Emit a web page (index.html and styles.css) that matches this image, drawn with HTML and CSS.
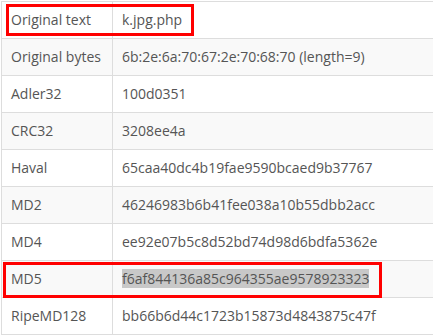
FILE: index.html
```html
<!DOCTYPE html>
<html>
<head>
<meta charset="utf-8">
<link rel="stylesheet" href="styles.css">
</head>
<body>
<div class="wrap">
<table class="hashes">
<tr><td class="k">Original text</td><td>k.jpg.php</td></tr>
<tr><td class="k">Original bytes</td><td>6b:2e:6a:70:67:2e:70:68:70 (length=9)</td></tr>
<tr><td class="k">Adler32</td><td>100d0351</td></tr>
<tr><td class="k">CRC32</td><td>3208ee4a</td></tr>
<tr><td class="k">Haval</td><td>65caa40dc4b19fae9590bcaed9b37767</td></tr>
<tr><td class="k">MD2</td><td>46246983b6b41fee038a10b55dbb2acc</td></tr>
<tr><td class="k">MD4</td><td>ee92e07b5c8d52bd74d98d6bdfa5362e</td></tr>
<tr><td class="k">MD5</td><td><span class="sel">f6af844136a85c964355ae9578923323</span></td></tr>
<tr><td class="k">RipeMD128</td><td>bb66b6d44c1723b15873d4843875c47f</td></tr>
</table>
<div class="mark mark-1"></div>
<div class="mark mark-2"></div>
</div>
</body>
</html>
```
FILE: styles.css
```css
html, body {
  margin: 0;
  padding: 0;
  background: #fff;
  overflow: hidden;
}
.wrap {
  position: relative;
  width: 433px;
  height: 335px;
  overflow: hidden;
  padding: 1px 0 0 1px;
  box-sizing: border-box;
}
.hashes {
  border-collapse: collapse;
  width: 470px;
  font-family: "Open Sans", sans-serif;
  font-size: 14px;
  color: #555;
}
.hashes td {
  border: 1px solid #ddd;
  padding: 8px 9px;
  line-height: 20px;
  white-space: nowrap;
}
.hashes td.k {
  width: 92px;
}
.hashes tr:nth-child(even) td {
  background: #f9f9f9;
}
.sel {
  background: #c8c8c8;
}
.mark {
  position: absolute;
  border: 3px solid #f00;
  box-sizing: border-box;
}
.mark-1 {
  left: 6px;
  top: 4px;
  width: 188px;
  height: 32px;
}
.mark-2 {
  left: 3px;
  top: 262px;
  width: 379px;
  height: 36px;
}
```
